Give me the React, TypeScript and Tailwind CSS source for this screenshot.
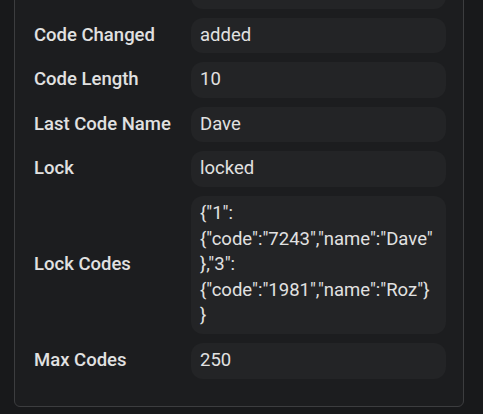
import React from "react";

type Row = { label: string; value: string };

const rows: Row[] = [
  { label: "Battery", value: "100" },
  { label: "Code Changed", value: "added" },
  { label: "Code Length", value: "10" },
  { label: "Last Code Name", value: "Dave" },
  { label: "Lock", value: "locked" },
  {
    label: "Lock Codes",
    value: '{"1":{"code":"7243","name":"Dave"},"3":{"code":"1981","name":"Roz"}}',
  },
  { label: "Max Codes", value: "250" },
];

const App = () => {
  return (
    <div className="w-[483px] h-[414px] overflow-hidden bg-[#18191b] font-['Roboto',sans-serif]">
      <div className="ml-[14px] w-[450px] -mt-[38px] border border-[#3c3d3f] rounded-[6px] bg-[#1c1d1f] pl-[19px] pr-[17px] pt-[10px] pb-[27px]">
        <div className="flex flex-col gap-[9px]">
          {rows.map((row) => (
            <div key={row.label} className="flex items-center">
              <div className="w-[157px] shrink-0 text-[18.5px] font-medium text-[#e1e1e1]">
                {row.label}
              </div>
              <div className="flex-1 min-w-0 rounded-[12px] bg-[#232426] pl-[9px] pr-[12px] py-[5px] text-[18.5px] leading-[25.6px] text-[#e1e1e1] break-words">
                {row.value}
              </div>
            </div>
          ))}
        </div>
      </div>
    </div>
  );
};

export default App;
